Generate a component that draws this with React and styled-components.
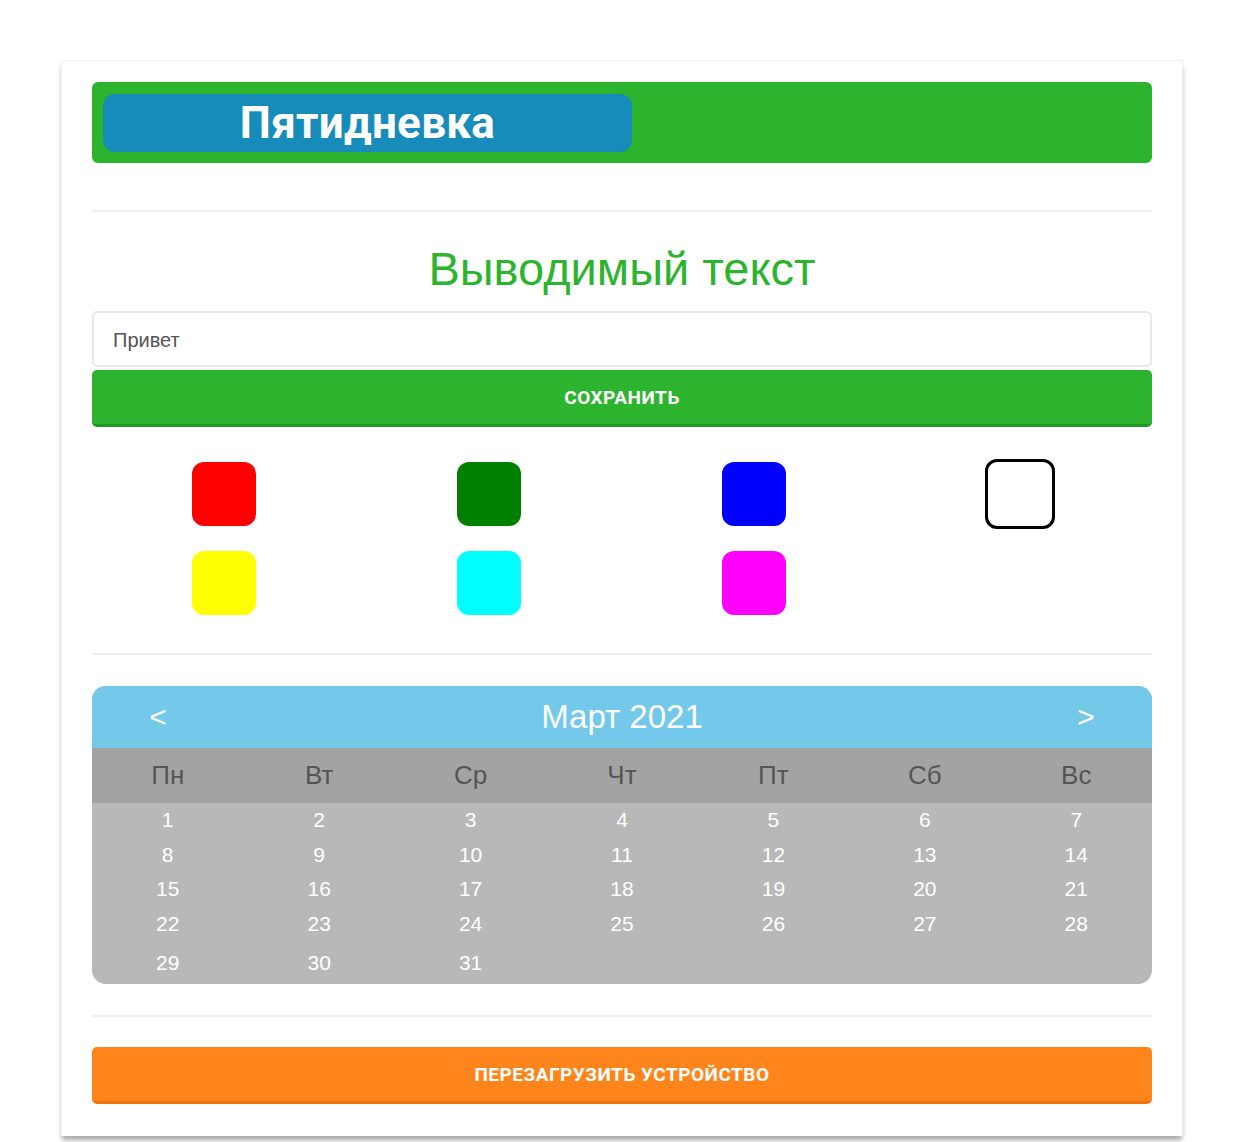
import React from 'react';
import styled, { createGlobalStyle } from 'styled-components';

const GlobalStyle = createGlobalStyle`
  body {
    margin: 0;
    background: #fff;
    font-family: 'Liberation Sans', Arial, sans-serif;
  }
`;

const Page = styled.div`
  padding: 60px 0 20px 61px;
`;

const Card = styled.div`
  width: 1122px;
  box-sizing: border-box;
  padding: 21px 30px 32px;
  background: #fff;
  border: 1px solid #f2f2f2;
  border-bottom: none;
  box-shadow: 0 5px 5px -1px rgba(0, 0, 0, 0.35);
`;

// шапка
const Header = styled.div`
  background: #2cb42e;
  border-radius: 6px;
  padding: 12px 11px 11px;
`;

const Brand = styled.div`
  width: 529px;
  height: 58px;
  background: #178bb9;
  border-radius: 12px;
  display: flex;
  align-items: center;
  justify-content: center;
  color: #fff;
  font-family: Roboto, 'Liberation Sans', sans-serif;
  font-weight: 700;
  font-size: 44px;
  letter-spacing: 0.3px;
`;

const Divider = styled.hr`
  border: none;
  border-top: 2px solid #efefef;
  margin: ${p => p.$m || '0'};
`;

const Title = styled.h2`
  margin: 29px 0 14px;
  text-align: center;
  color: #2cb42e;
  font-weight: 400;
  font-size: 47px;
  line-height: 56px;
`;

const Input = styled.input`
  display: block;
  width: 100%;
  height: 56px;
  box-sizing: border-box;
  border: 2px solid #e8e8e8;
  border-radius: 5px;
  padding: 2px 19px 0;
  font-family: 'Liberation Sans', Arial, sans-serif;
  font-size: 20px;
  color: #555;
  outline: none;
`;

const Button = styled.button`
  display: block;
  width: 100%;
  height: 57px;
  margin-top: ${p => p.$top || '0'};
  border: none;
  border-radius: 5px;
  background: ${p => p.$bg};
  border-bottom: 3px solid ${p => p.$edge};
  color: #fff;
  font-family: Roboto, 'Liberation Sans', sans-serif;
  font-weight: 700;
  font-size: 19px;
  letter-spacing: 0.5px;
  text-transform: uppercase;
`;

// палитра
const Palette = styled.div`
  display: grid;
  grid-template-columns: repeat(4, 1fr);
  row-gap: 25px;
  margin-top: 35px;
`;

const Cell = styled.div`
  display: flex;
  justify-content: center;
`;

const Swatch = styled.div`
  width: ${p => (p.$outline ? '70px' : '64px')};
  height: ${p => (p.$outline ? '70px' : '64px')};
  margin: ${p => (p.$outline ? '-3px 0 -3px 0' : '0 1px 0 0')};
  box-sizing: border-box;
  border-radius: 12px;
  background: ${p => p.$color};
  border: ${p => (p.$outline ? '3px solid #000' : 'none')};
`;

// календарь
const Calendar = styled.div`
  border-radius: 14px;
  overflow: hidden;
  background: #b8b8b8;
`;

const CalHead = styled.div`
  height: 62px;
  background: #74c9ea;
  display: flex;
  align-items: center;
  justify-content: space-between;
  padding: 0 56px;
  color: #fff;
`;

const Arrow = styled.span`
  font-size: 30px;
  width: 20px;
  text-align: center;
`;

const Month = styled.span`
  font-size: 33px;
`;

const Week = styled.div`
  height: 55px;
  background: #a3a3a3;
  display: grid;
  grid-template-columns: repeat(7, 1fr);
  align-items: center;
  text-align: center;
  color: #555;
  font-size: 26px;
`;

const Days = styled.div`
  display: grid;
  grid-template-columns: repeat(7, 1fr);
  grid-template-rows: repeat(4, 34.5px) 43px;
  align-items: center;
  text-align: center;
  color: #fff;
  font-size: 21px;
`;

const colors = ['#ff0000', '#008000', '#0000ff', null, '#ffff00', '#00ffff', '#ff00ff'];
const weekdays = ['Пн', 'Вт', 'Ср', 'Чт', 'Пт', 'Сб', 'Вс'];
const days = Array.from({ length: 31 }, (_, i) => i + 1);

export default function App() {
  return (
    <Page>
      <GlobalStyle />
      <Card>
        <Header>
          <Brand>Пятидневка</Brand>
        </Header>

        <Divider $m="47px 0 0" />
        <Title>Выводимый текст</Title>
        <Input defaultValue="Привет" />
        <Button $bg="#2cb42e" $edge="#1f9a22" $top="3px">Сохранить</Button>

        <Palette>
          {colors.map((c, i) => (
            <Cell key={i}>
              {c ? <Swatch $color={c} /> : <Swatch $outline $color="#fff" />}
            </Cell>
          ))}
        </Palette>

        <Divider $m="38px 0 31px" />

        <Calendar>
          <CalHead>
            <Arrow>&lt;</Arrow>
            <Month>Март 2021</Month>
            <Arrow>&gt;</Arrow>
          </CalHead>
          <Week>
            {weekdays.map(d => <span key={d}>{d}</span>)}
          </Week>
          <Days>
            {days.map(d => <span key={d}>{d}</span>)}
          </Days>
        </Calendar>

        <Divider $m="31px 0 30px" />

        <Button $bg="#fd851b" $edge="#f07510">Перезагрузить устройство</Button>
      </Card>
    </Page>
  );
}
